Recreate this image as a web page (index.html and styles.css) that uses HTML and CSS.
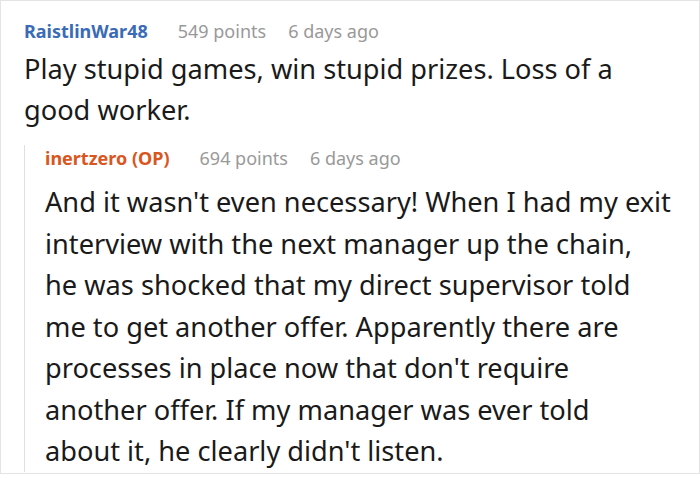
FILE: index.html
```html
<!DOCTYPE html>
<html lang="en">
<head>
    <meta charset="UTF-8">
    <meta name="viewport" content="width=device-width, initial-scale=1.0">
    <title>Comment thread</title>
    <link rel="stylesheet" href="styles.css">
</head>
<body>

    <div class="thread">
        <div class="comment">
            <div class="meta">
                <span class="author">RaistlinWar48</span>
                <span class="points">549 points</span>
                <span class="time">6 days ago</span>
            </div>
            <p class="text">Play stupid games, win stupid prizes. Loss of a<br>good worker.</p>

            <div class="reply">
                <div class="meta">
                    <span class="author op">inertzero (OP)</span>
                    <span class="points">694 points</span>
                    <span class="time">6 days ago</span>
                </div>
                <p class="text">And it wasn't even necessary! When I had my exit<br>interview with the next manager up the chain,<br>he was shocked that my direct supervisor told<br>me to get another offer. Apparently there are<br>processes in place now that don't require<br>another offer. If my manager was ever told<br>about it, he clearly didn't listen.</p>
            </div>
        </div>
    </div>

</body>
</html>
```

FILE: styles.css
```css
/* Page */
body {
    margin: 0;
    background-color: #fff;
    font-family: "Noto Sans", "Open Sans", sans-serif;
    color: #1a1a1a;
}
/* Outer frame */
.thread {
    width: 700px;
    height: 474px;
    box-sizing: border-box;
    border: 1px solid #e4e4e4;
    padding: 17px 0 0 23px;
    overflow: hidden;
}
/* Comment header line */
.meta {
    display: flex;
    gap: 22px;
    font-size: 18px;
    line-height: 26px;
}
.author {
    font-weight: bold;
    color: #3a6bb6;
    margin-right: 8px;
}
.author.op {
    color: #d9561f;
}
.points, .time {
    color: #999;
}
/* Comment body */
.text {
    margin: 4px 0 0;
    font-size: 27.2px;
    line-height: 41px;
    padding-right: 10px;
}
/* Nested reply */
.reply {
    margin-top: 15px;
    border-left: 1px solid #e0e0e0;
    padding-left: 20px;
}
.reply .text {
    margin: 10px 0 -4px;
    line-height: 41.5px;
}
```
